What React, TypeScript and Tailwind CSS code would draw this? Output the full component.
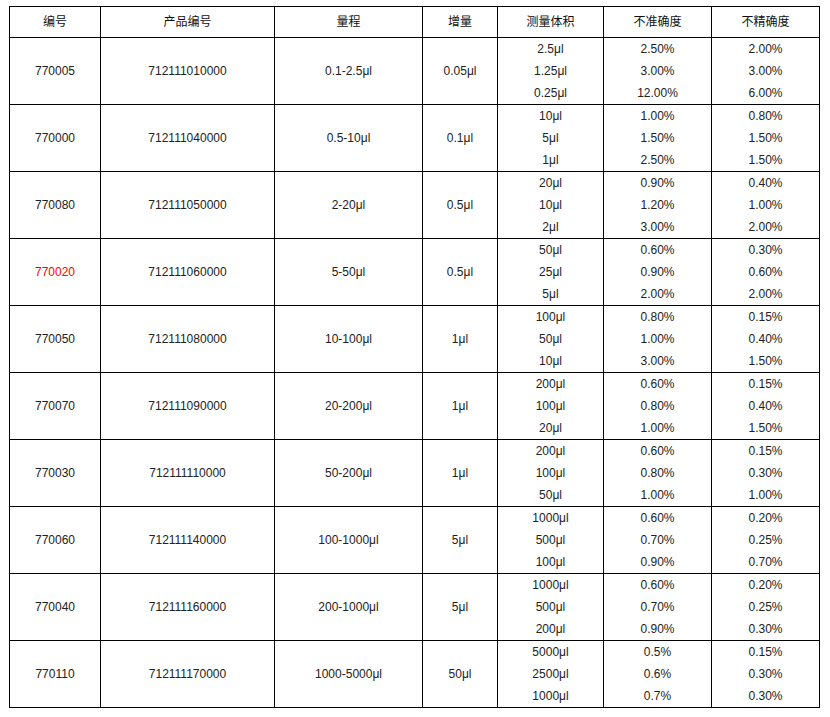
import React from "react";

type Row = {
  code: string;
  product: string;
  range: string;
  step: string;
  volumes: string[];
  inaccuracy: string[];
  imprecision: string[];
  highlight?: boolean;
};

const rows: Row[] = [
  { code: "770005", product: "712111010000", range: "0.1-2.5μl", step: "0.05μl", volumes: ["2.5μl", "1.25μl", "0.25μl"], inaccuracy: ["2.50%", "3.00%", "12.00%"], imprecision: ["2.00%", "3.00%", "6.00%"] },
  { code: "770000", product: "712111040000", range: "0.5-10μl", step: "0.1μl", volumes: ["10μl", "5μl", "1μl"], inaccuracy: ["1.00%", "1.50%", "2.50%"], imprecision: ["0.80%", "1.50%", "1.50%"] },
  { code: "770080", product: "712111050000", range: "2-20μl", step: "0.5μl", volumes: ["20μl", "10μl", "2μl"], inaccuracy: ["0.90%", "1.20%", "3.00%"], imprecision: ["0.40%", "1.00%", "2.00%"] },
  { code: "770020", product: "712111060000", range: "5-50μl", step: "0.5μl", volumes: ["50μl", "25μl", "5μl"], inaccuracy: ["0.60%", "0.90%", "2.00%"], imprecision: ["0.30%", "0.60%", "2.00%"], highlight: true },
  { code: "770050", product: "712111080000", range: "10-100μl", step: "1μl", volumes: ["100μl", "50μl", "10μl"], inaccuracy: ["0.80%", "1.00%", "3.00%"], imprecision: ["0.15%", "0.40%", "1.50%"] },
  { code: "770070", product: "712111090000", range: "20-200μl", step: "1μl", volumes: ["200μl", "100μl", "20μl"], inaccuracy: ["0.60%", "0.80%", "1.00%"], imprecision: ["0.15%", "0.40%", "1.50%"] },
  { code: "770030", product: "712111110000", range: "50-200μl", step: "1μl", volumes: ["200μl", "100μl", "50μl"], inaccuracy: ["0.60%", "0.80%", "1.00%"], imprecision: ["0.15%", "0.30%", "1.00%"] },
  { code: "770060", product: "712111140000", range: "100-1000μl", step: "5μl", volumes: ["1000μl", "500μl", "100μl"], inaccuracy: ["0.60%", "0.70%", "0.90%"], imprecision: ["0.20%", "0.25%", "0.70%"] },
  { code: "770040", product: "712111160000", range: "200-1000μl", step: "5μl", volumes: ["1000μl", "500μl", "200μl"], inaccuracy: ["0.60%", "0.70%", "0.90%"], imprecision: ["0.20%", "0.25%", "0.30%"] },
  { code: "770110", product: "712111170000", range: "1000-5000μl", step: "50μl", volumes: ["5000μl", "2500μl", "1000μl"], inaccuracy: ["0.5%", "0.6%", "0.7%"], imprecision: ["0.15%", "0.30%", "0.30%"] },
];

const headers = ["编号", "产品编号", "量程", "增量", "测量体积", "不准确度", "不精确度"];
const widths = ["w-[91px]", "w-[174px]", "w-[148px]", "w-[75px]", "w-[106px]", "w-[108px]", "w-[108px]"];

const cell = "border border-black p-0 text-center align-middle";

const Lines = ({ items }: { items: string[] }) => (
  <div className="flex flex-col">
    {items.map((t, i) => (
      <div key={i} className="h-[22px] leading-[22px]">
        {t}
      </div>
    ))}
  </div>
);

export default function App() {
  return (
    <div className="bg-white w-[830px] h-[717px] pl-[9px] pt-[6px] text-[12px] text-[#222] font-['Liberation_Sans','Noto_Sans_CJK_SC',sans-serif]">
      <table className="table-fixed border-collapse w-[810px]">
        <colgroup>
          {widths.map((w, i) => (
            <col key={i} className={w} />
          ))}
        </colgroup>
        <thead>
          <tr className="h-[31px]">
            {headers.map((h) => (
              <th key={h} className={`${cell} font-normal text-[#111]`}>
                {h}
              </th>
            ))}
          </tr>
        </thead>
        <tbody>
          {rows.map((r) => (
            <tr key={r.code} className="h-[67px]">
              <td className={`${cell} ${r.highlight ? "text-[#ff0000]" : ""}`}>{r.code}</td>
              <td className={cell}>{r.product}</td>
              <td className={cell}>{r.range}</td>
              <td className={cell}>{r.step}</td>
              <td className={cell}>
                <Lines items={r.volumes} />
              </td>
              <td className={cell}>
                <Lines items={r.inaccuracy} />
              </td>
              <td className={cell}>
                <Lines items={r.imprecision} />
              </td>
            </tr>
          ))}
        </tbody>
      </table>
    </div>
  );
}
